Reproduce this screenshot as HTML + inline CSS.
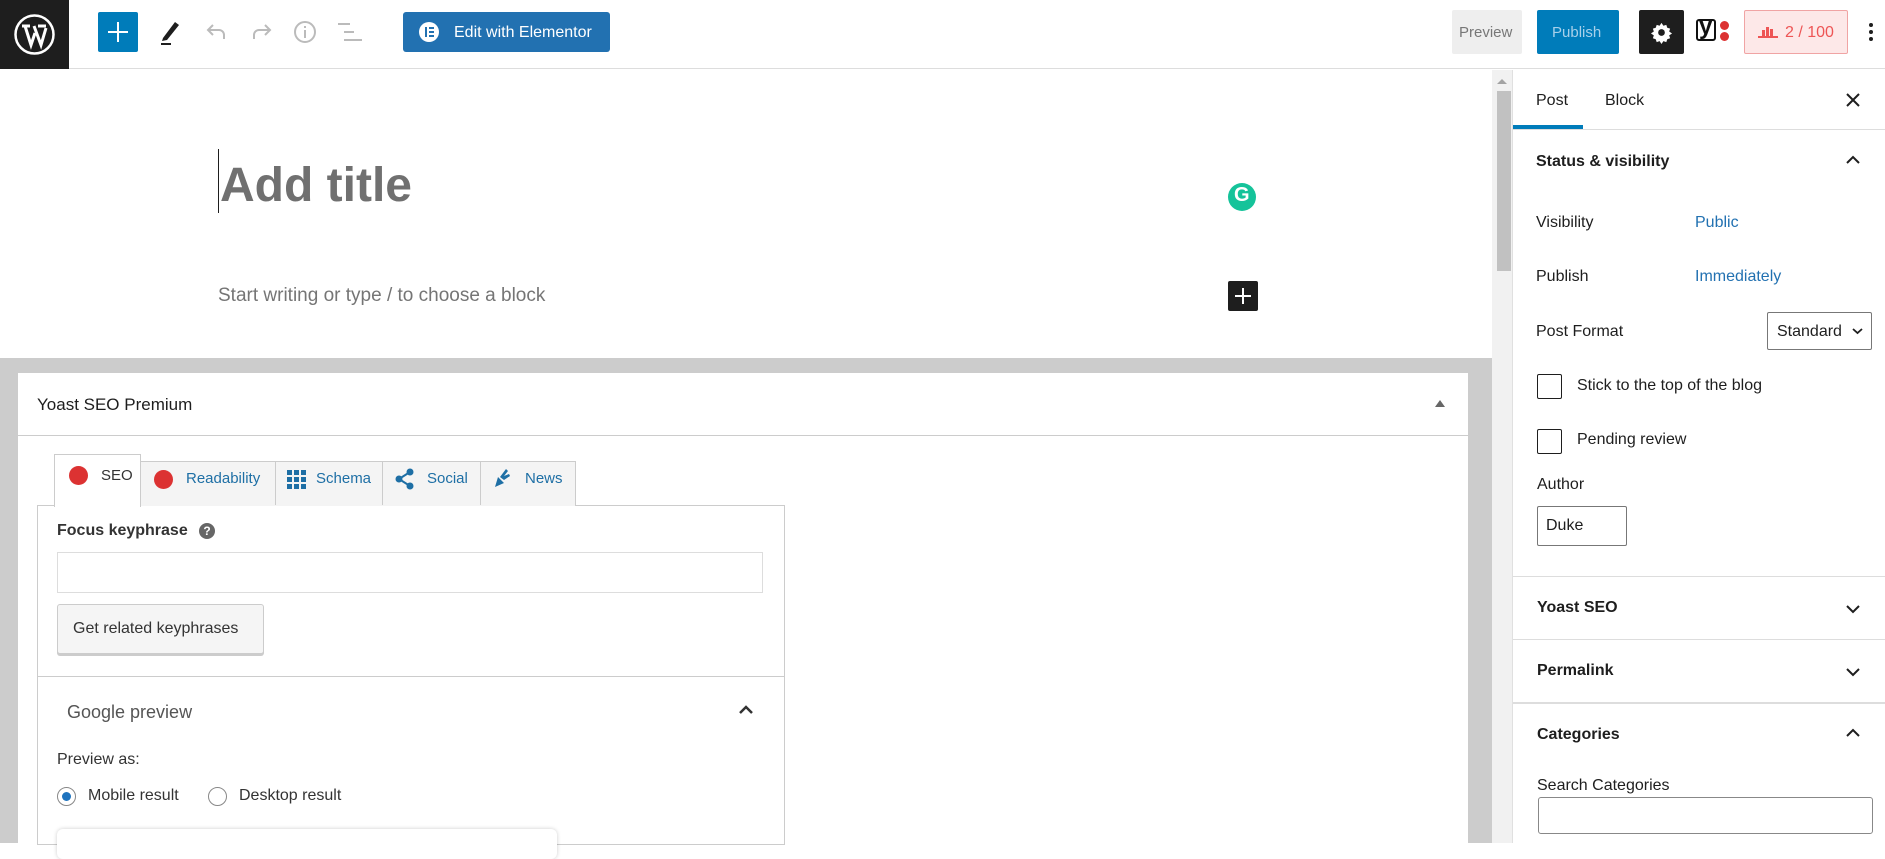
<!DOCTYPE html>
<html><head><meta charset="utf-8"><style>
*{box-sizing:border-box;margin:0;padding:0}
body{width:1885px;height:843px;overflow:hidden;position:relative;background:#fff;font-family:"Liberation Sans",sans-serif;color:#1e1e1e}
.a{position:absolute}
.t{position:absolute;white-space:nowrap}
</style></head><body>
<div class="a" style="left:0;top:0;width:1885px;height:69px;border-bottom:1px solid #ddd;background:#fff"></div>
<div class="a" style="left:0;top:0;width:69px;height:69px;background:#1e1e1e"></div>
<svg class="a" style="left:13px;top:13px" width="43" height="43" viewBox="0 0 43 43"><circle cx="21.5" cy="21.5" r="19" fill="none" stroke="#fff" stroke-width="2.5"/><path d="M9 13h8M25 13h8M12 13l6 19 4-12M21 13l7 19 5-17" fill="none" stroke="#fff" stroke-width="3"/></svg>
<div class="a" style="left:98px;top:12px;width:40px;height:40px;background:#007cba;border-radius:2px"></div>
<div class="a" style="left:108px;top:31px;width:20px;height:2px;background:#fff"></div>
<div class="a" style="left:117px;top:22px;width:2px;height:20px;background:#fff"></div>
<svg class="a" style="left:158px;top:18px" width="26" height="28" viewBox="0 0 26 28"><path d="M5 20 L17 4 L21 7 L9 22 L4 23Z" fill="#1e1e1e"/><rect x="3" y="25" width="10" height="2" fill="#1e1e1e"/></svg>
<svg class="a" style="left:204px;top:20px" width="26" height="24" viewBox="0 0 26 24" fill="none" stroke="#bbb" stroke-width="2"><path d="M9 5 4 10l5 5M4 10h11a5 5 0 0 1 5 5v4"/></svg>
<svg class="a" style="left:248px;top:20px" width="26" height="24" viewBox="0 0 26 24" fill="none" stroke="#bbb" stroke-width="2"><path d="M17 5l5 5-5 5M22 10H11a5 5 0 0 0-5 5v4"/></svg>
<svg class="a" style="left:292px;top:19px" width="26" height="26" viewBox="0 0 26 26" fill="none" stroke="#bbb" stroke-width="2"><circle cx="13" cy="13" r="10"/><path d="M13 11v8M13 7v2"/></svg>
<svg class="a" style="left:336px;top:20px" width="28" height="24" viewBox="0 0 28 24" fill="#bbb"><rect x="2" y="3" width="12" height="2"/><rect x="8" y="11" width="10" height="2"/><rect x="8" y="19" width="18" height="2"/></svg>
<div class="a" style="left:403px;top:12px;width:207px;height:40px;background:#2271b1;border-radius:3px"></div>
<div class="a" style="left:419px;top:22px;width:20px;height:20px;border-radius:50%;background:#fff"></div>
<div class="a" style="left:425px;top:27px;width:2px;height:10px;background:#2271b1"></div>
<div class="a" style="left:429px;top:27px;width:5px;height:2px;background:#2271b1;box-shadow:0 4px 0 #2271b1,0 8px 0 #2271b1"></div>
<div class="t" style="left:454px;top:24px;font-size:16px;color:#fff">Edit with Elementor</div>
<div class="a" style="left:1452px;top:10px;width:70px;height:44px;background:#eee;border-radius:2px"></div>
<div class="t" style="left:1459px;top:24px;font-size:15px;color:#777">Preview</div>
<div class="a" style="left:1537px;top:10px;width:82px;height:44px;background:#007cba;border-radius:2px"></div>
<div class="t" style="left:1552px;top:24px;font-size:15px;color:#a7d0ea">Publish</div>
<div class="a" style="left:1639px;top:10px;width:45px;height:44px;background:#1e1e1e;border-radius:2px"></div>
<svg class="a" style="left:1650px;top:21px" width="23" height="23" viewBox="0 0 24 24"><path fill="#fff" d="M12 2l2 3 3-1 1 3 3 1-1 3 3 2-3 2 1 3-3 1-1 3-3-1-2 3-2-3-3 1-1-3-3-1 1-3-3-2 3-2-1-3 3-1 1-3 3 1z"/><circle cx="12" cy="12" r="3.5" fill="#1e1e1e"/></svg>
<div class="a" style="left:1696px;top:19px;width:20px;height:22px;border:2px solid #111;border-radius:3px"></div>
<div class="t" style="left:1699px;top:13px;font-size:24px;font-weight:bold;color:#111">y</div>
<div class="a" style="left:1720px;top:21px;width:9px;height:9px;border-radius:50%;background:#dc3232"></div>
<div class="a" style="left:1720px;top:32px;width:9px;height:9px;border-radius:50%;background:#dc3232"></div>
<div class="a" style="left:1744px;top:10px;width:104px;height:44px;background:#fde8e8;border:1px solid #f0a4a4;border-radius:2px"></div>
<svg class="a" style="left:1757px;top:24px" width="22" height="16" viewBox="0 0 22 16" fill="#e55"><path d="M1 12h20v2H1zM5 6h3v6H5zM9 3h3v9H9zM13 5h3v7h-3z"/></svg>
<div class="t" style="left:1785px;top:24px;font-size:16px;color:#e55">2 / 100</div>
<div class="a" style="left:1869px;top:23px;width:4px;height:4px;border-radius:50%;background:#1e1e1e;box-shadow:0 7px 0 #1e1e1e,0 14px 0 #1e1e1e"></div>

<div class="a" style="left:218px;top:149px;width:1px;height:64px;background:#1e1e1e"></div>
<div class="t" style="left:220px;top:158px;font-size:48px;font-weight:bold;color:#707070">Add title</div>
<div class="a" style="left:1228px;top:183px;width:28px;height:28px;border-radius:50%;background:#15c39a"></div>
<div class="t" style="left:1234px;top:184px;font-size:20px;font-weight:bold;color:#fff">G</div>
<div class="t" style="left:218px;top:285px;font-size:19px;color:#757575">Start writing or type / to choose a block</div>
<div class="a" style="left:1228px;top:281px;width:30px;height:30px;background:#1e1e1e;border-radius:2px"></div>
<div class="a" style="left:1235px;top:295px;width:16px;height:2px;background:#fff"></div>
<div class="a" style="left:1242px;top:288px;width:2px;height:16px;background:#fff"></div>

<div class="a" style="left:0;top:358px;width:1492px;height:485px;background:#ccc"></div>
<div class="a" style="left:18px;top:373px;width:1450px;height:470px;background:#fff"></div>
<div class="t" style="left:37px;top:395px;font-size:17px;color:#1e1e1e">Yoast SEO Premium</div>
<div class="a" style="left:1435px;top:400px;border:5px solid transparent;border-bottom:7px solid #666;border-top:0"></div>
<div class="a" style="left:18px;top:435px;width:1450px;height:1px;background:#ccc"></div>

<div class="a" style="left:37px;top:505px;width:748px;height:340px;border:1px solid #ccc"></div>
<div class="a" style="left:140px;top:461px;width:436px;height:45px;background:#f4f4f4;border:1px solid #ccc;border-bottom:0"></div>
<div class="a" style="left:275px;top:461px;width:1px;height:44px;background:#ccc"></div>
<div class="a" style="left:382px;top:461px;width:1px;height:44px;background:#ccc"></div>
<div class="a" style="left:480px;top:461px;width:1px;height:44px;background:#ccc"></div>
<div class="a" style="left:54px;top:454px;width:87px;height:53px;background:#fff;border:1px solid #ccc;border-bottom:0"></div>
<div class="a" style="left:69px;top:466px;width:19px;height:19px;border-radius:50%;background:#dc3232"></div>
<div class="t" style="left:101px;top:467px;font-size:15px;color:#333">SEO</div>
<div class="a" style="left:154px;top:470px;width:19px;height:19px;border-radius:50%;background:#dc3232"></div>
<div class="t" style="left:186px;top:470px;font-size:15px;color:#1e6fa5">Readability</div>
<svg class="a" style="left:287px;top:470px" width="19" height="19" viewBox="0 0 19 19" fill="#1e6fa5"><rect x="0" y="0" width="5" height="5"/><rect x="7" y="0" width="5" height="5"/><rect x="14" y="0" width="5" height="5"/><rect x="0" y="7" width="5" height="5"/><rect x="7" y="7" width="5" height="5"/><rect x="14" y="7" width="5" height="5"/><rect x="0" y="14" width="5" height="5"/><rect x="7" y="14" width="5" height="5"/><rect x="14" y="14" width="5" height="5"/></svg>
<div class="t" style="left:316px;top:470px;font-size:15px;color:#1e6fa5">Schema</div>
<svg class="a" style="left:395px;top:468px" width="20" height="22" viewBox="0 0 20 22" fill="#1e6fa5"><circle cx="15" cy="4" r="3.5"/><circle cx="4" cy="11" r="3.5"/><circle cx="15" cy="18" r="3.5"/><path d="M4 11 15 4M4 11l11 7" stroke="#1e6fa5" stroke-width="2"/></svg>
<div class="t" style="left:427px;top:470px;font-size:15px;color:#1e6fa5">Social</div>
<svg class="a" style="left:492px;top:467px" width="22" height="22" viewBox="0 0 22 22" fill="#1e6fa5"><path d="M3 20l3-10 6 6zM8 10l6-8 2 2-4 5 5-2 1 2-6 4z"/></svg>
<div class="t" style="left:525px;top:470px;font-size:15px;color:#1e6fa5">News</div>

<div class="t" style="left:57px;top:522px;font-size:16px;font-weight:bold;color:#333">Focus keyphrase</div>
<div class="a" style="left:199px;top:523px;width:16px;height:16px;border-radius:50%;background:#666;color:#fff;font-size:12px;font-weight:bold;text-align:center;line-height:16px">?</div>
<div class="a" style="left:57px;top:552px;width:706px;height:41px;border:1px solid #ddd"></div>
<div class="a" style="left:57px;top:604px;width:207px;height:50px;background:#f5f5f5;border:1px solid #ccc;border-radius:3px;box-shadow:0 2px 0 #ccc"></div>
<div class="t" style="left:73px;top:620px;font-size:16px;color:#333">Get related keyphrases</div>
<div class="a" style="left:37px;top:676px;width:748px;height:1px;background:#ccc"></div>
<div class="t" style="left:67px;top:702px;font-size:18px;color:#555">Google preview</div>
<svg class="a" style="left:738px;top:704px" width="16" height="12" viewBox="0 0 16 12" fill="none" stroke="#333" stroke-width="2.5"><path d="M2 9l6-6 6 6"/></svg>
<div class="t" style="left:57px;top:751px;font-size:16px;color:#333">Preview as:</div>
<div class="a" style="left:57px;top:787px;width:19px;height:19px;border-radius:50%;border:1px solid #888"></div>
<div class="a" style="left:62px;top:792px;width:9px;height:9px;border-radius:50%;background:#1e73be"></div>
<div class="t" style="left:88px;top:787px;font-size:16px;color:#333">Mobile result</div>
<div class="a" style="left:208px;top:787px;width:19px;height:19px;border-radius:50%;border:1px solid #888"></div>
<div class="t" style="left:239px;top:787px;font-size:16px;color:#333">Desktop result</div>
<div class="a" style="left:57px;top:829px;width:500px;height:30px;border-radius:6px;box-shadow:0 0 4px rgba(0,0,0,.2);background:#fff"></div>

<div class="a" style="left:1492px;top:70px;width:20px;height:773px;background:#f1f1f1"></div>
<div class="a" style="left:1497px;top:79px;border:5px solid transparent;border-bottom:5px solid #a3a3a3;border-top:0"></div>
<div class="a" style="left:1497px;top:91px;width:14px;height:180px;background:#c1c1c1"></div>

<div class="a" style="left:1512px;top:70px;width:1px;height:773px;background:#e0e0e0"></div>
<div class="t" style="left:1536px;top:92px;font-size:16px;color:#1e1e1e">Post</div>
<div class="t" style="left:1605px;top:92px;font-size:16px;color:#1e1e1e">Block</div>
<div class="a" style="left:1513px;top:125px;width:70px;height:4px;background:#007cba"></div>
<div class="a" style="left:1513px;top:129px;width:372px;height:1px;background:#ddd"></div>
<svg class="a" style="left:1846px;top:93px" width="14" height="14" viewBox="0 0 14 14" stroke="#1e1e1e" stroke-width="2"><path d="M1 1l12 12M13 1L1 13"/></svg>
<div class="t" style="left:1536px;top:153px;font-size:16px;font-weight:bold;color:#1e1e1e">Status &amp; visibility</div>
<svg class="a" style="left:1846px;top:155px" width="14" height="10" viewBox="0 0 14 10" fill="none" stroke="#1e1e1e" stroke-width="2"><path d="M1 8l6-6 6 6"/></svg>
<div class="t" style="left:1536px;top:214px;font-size:16px">Visibility</div>
<div class="t" style="left:1695px;top:214px;font-size:16px;color:#2271b1">Public</div>
<div class="t" style="left:1536px;top:268px;font-size:16px">Publish</div>
<div class="t" style="left:1695px;top:268px;font-size:16px;color:#2271b1">Immediately</div>
<div class="t" style="left:1536px;top:323px;font-size:16px">Post Format</div>
<div class="a" style="left:1767px;top:312px;width:105px;height:38px;border:1px solid #777;border-radius:2px"></div>
<div class="t" style="left:1777px;top:323px;font-size:16px">Standard</div>
<svg class="a" style="left:1852px;top:327px" width="11" height="8" viewBox="0 0 11 8" fill="none" stroke="#1e1e1e" stroke-width="1.8"><path d="M1 2l4.5 4L10 2"/></svg>
<div class="a" style="left:1537px;top:374px;width:25px;height:25px;border:1px solid #1e1e1e;border-radius:2px"></div>
<div class="t" style="left:1577px;top:377px;font-size:16px">Stick to the top of the blog</div>
<div class="a" style="left:1537px;top:429px;width:25px;height:25px;border:1px solid #1e1e1e;border-radius:2px"></div>
<div class="t" style="left:1577px;top:431px;font-size:16px">Pending review</div>
<div class="t" style="left:1537px;top:476px;font-size:16px">Author</div>
<div class="a" style="left:1537px;top:506px;width:90px;height:40px;border:1px solid #777;border-radius:2px"></div>
<div class="t" style="left:1546px;top:517px;font-size:16px">Duke</div>
<div class="a" style="left:1513px;top:576px;width:372px;height:1px;background:#ddd"></div>
<div class="t" style="left:1537px;top:599px;font-size:16px;font-weight:bold">Yoast SEO</div>
<svg class="a" style="left:1846px;top:604px" width="14" height="10" viewBox="0 0 14 10" fill="none" stroke="#1e1e1e" stroke-width="2"><path d="M1 2l6 6 6-6"/></svg>
<div class="a" style="left:1513px;top:639px;width:372px;height:1px;background:#ddd"></div>
<div class="t" style="left:1537px;top:662px;font-size:16px;font-weight:bold">Permalink</div>
<svg class="a" style="left:1846px;top:667px" width="14" height="10" viewBox="0 0 14 10" fill="none" stroke="#1e1e1e" stroke-width="2"><path d="M1 2l6 6 6-6"/></svg>
<div class="a" style="left:1513px;top:702px;width:372px;height:2px;background:#ddd"></div>
<div class="t" style="left:1537px;top:726px;font-size:16px;font-weight:bold">Categories</div>
<svg class="a" style="left:1846px;top:728px" width="14" height="10" viewBox="0 0 14 10" fill="none" stroke="#1e1e1e" stroke-width="2"><path d="M1 8l6-6 6 6"/></svg>
<div class="t" style="left:1537px;top:777px;font-size:16px">Search Categories</div>
<div class="a" style="left:1538px;top:797px;width:335px;height:37px;border:1px solid #888;border-radius:3px"></div>
</body></html>
